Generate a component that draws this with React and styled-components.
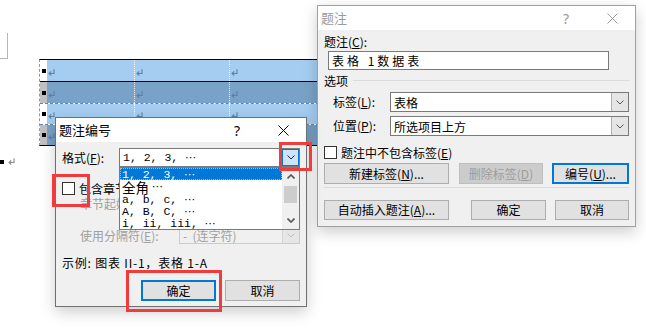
import React from 'react';
import styled, { createGlobalStyle } from 'styled-components';

const GlobalStyle = createGlobalStyle`
  html, body { margin: 0; padding: 0; background: #fff; }
  body { width: 646px; height: 328px; overflow: hidden; font-family: "Noto Sans CJK SC", sans-serif; }
`;

const Desktop = styled.div`
  position: relative;
  width: 646px;
  height: 328px;
  overflow: hidden;
  background: #fff;
`;

/* ---------- document ---------- */
const DocPage = styled.div`
  display: flex;
  flex-direction: column;
  align-items: flex-start;
`;

const CornerMark = styled.div`
  margin-top: 33px;
  width: 7px;
  height: 25px;
  border-right: 1px solid #b5b5b5;
  border-bottom: 1px solid #b5b5b5;
`;

const Table = styled.div`
  margin-left: 39px;
  border-left: 1px dashed #8a9ab0;
  border-top: 1px solid #000;
  border-bottom: 1px solid #000;
  display: flex;
  flex-direction: column;
`;

const TRow = styled.div`
  display: grid;
  grid-template-columns: 7px 87px 95px 95px;
  height: ${p => p.$h}px;
  border-top: ${p => (p.$line === 'solid' ? '1px solid #000' : p.$line === 'dashed' ? '1px dashed #5f86b0' : 'none')};
`;

const TCell = styled.div`
  display: flex;
  align-items: center;
  padding: 3px 0 0 1px;
  box-sizing: border-box;
  background: ${p => (p.$lead ? (p.$dark ? '#c0c0c0' : '#ffffff') : p.$dark ? '#78a2c7' : '#a4cdf1')};
  border-left: ${p => (p.$divider ? '1px dotted rgba(255,255,255,0.85)' : 'none')};
`;

const RowDot = styled.span`
  display: block;
  width: 4px;
  height: 4px;
  margin-left: 1px;
  margin-top: -3px;
  background: #000;
`;

const ParaMark = styled.div`
  margin-top: 9px;
  height: 10px;
  display: flex;
  align-items: flex-end;
  gap: 4px;
`;

const ParaDot = styled.span`
  display: block;
  width: 4px;
  height: 4px;
  margin-bottom: 1px;
  background: #000;
`;

const ReturnArrow = ({ color = '#5b80a8' }) => (
  <svg width="7" height="7" viewBox="0 0 7 7">
    <path d="M6 0.3 V4.5 H1.3" fill="none" stroke={color} strokeWidth="1.1" />
    <path d="M3.2 2.4 L1.1 4.5 L3.2 6.6" fill="none" stroke={color} strokeWidth="1.1" />
  </svg>
);

/* ---------- dialogs ---------- */
const Dialog = styled.div`
  position: absolute;
  left: ${p => p.$x}px;
  top: ${p => p.$y}px;
  width: ${p => p.$w}px;
  height: ${p => p.$h}px;
  box-sizing: border-box;
  border: 1px solid ${p => (p.$active ? '#707070' : '#a0a0a0')};
  background: #f0f0f0;
  box-shadow: 0 5px 14px rgba(0, 0, 0, 0.2);
  display: flex;
  flex-direction: column;
  font-family: "Noto Sans CJK SC", sans-serif;
  font-size: 12px;
  color: #000;
  z-index: ${p => (p.$active ? 3 : 2)};
`;

const TitleBar = styled.div`
  height: 24px;
  flex: none;
  background: #fff;
  display: flex;
  align-items: center;
`;

const TitleText = styled.div`
  flex: 1;
  padding-left: 3px;
  font-size: 13px;
  line-height: 24px;
  color: ${p => (p.$active ? '#000' : '#9a9a9a')};
`;

const CapBtn = styled.div`
  width: 46px;
  height: 24px;
  display: flex;
  align-items: center;
  justify-content: center;
  font-size: 14px;
  font-family: "Noto Sans", sans-serif;
  color: ${p => (p.$active ? '#000' : '#9a9a9a')};
`;

const CloseIcon = ({ color }) => (
  <svg width="11" height="11" viewBox="0 0 11 11">
    <path d="M0.5 0.5 L10.5 10.5 M10.5 0.5 L0.5 10.5" stroke={color} strokeWidth="1" fill="none" />
  </svg>
);

const Body = styled.div`
  flex: 1;
  position: relative;
  display: flex;
  flex-direction: column;
`;

const Row = styled.div`
  display: flex;
  align-items: center;
  flex: none;
  height: ${p => p.$h}px;
  margin-top: ${p => p.$mt || 0}px;
  padding-left: ${p => p.$pl || 0}px;
  padding-right: ${p => p.$pr || 0}px;
  gap: ${p => p.$gap || 0}px;
  justify-content: ${p => p.$justify || 'flex-start'};
`;

const Label = styled.span`
  flex: none;
  width: ${p => (p.$w ? `${p.$w}px` : 'auto')};
  margin-left: ${p => p.$ml || 0}px;
  white-space: nowrap;
  line-height: 16px;
  letter-spacing: ${p => p.$ls || 0}px;
  color: ${p => (p.$disabled ? '#a0a0a0' : '#000')};
`;

const Key = styled.span`
  text-decoration: underline;
  text-underline-offset: 1px;
`;

const Combo = styled.div`
  flex: none;
  box-sizing: border-box;
  width: ${p => p.$w}px;
  height: ${p => p.$h}px;
  border: 1px solid ${p => (p.$disabled ? '#cccccc' : '#7a7a7a')};
  background: ${p => (p.$disabled ? '#f0f0f0' : '#fff')};
  display: flex;
  align-items: stretch;
`;

const ComboText = styled.div`
  flex: 1;
  padding-left: 3px;
  display: flex;
  align-items: center;
  white-space: pre;
  overflow: hidden;
  font-family: ${p => (p.$mono ? '"Liberation Mono", "Noto Sans CJK SC", monospace' : '"Noto Sans CJK SC", sans-serif')};
  font-size: ${p => (p.$mono ? '11.5px' : '12px')};
  color: ${p => (p.$disabled ? '#a0a0a0' : '#000')};
`;

const ComboBtn = styled.div`
  flex: none;
  width: 17px;
  box-sizing: border-box;
  display: flex;
  align-items: center;
  justify-content: center;
  background: ${p => (p.$hot ? '#cce4f7' : p.$disabled ? '#e6e6e6' : '#e5e5e5')};
  border: ${p => (p.$hot ? '1px solid #0078d7' : 'none')};
  border-left: 1px solid ${p => (p.$hot ? '#0078d7' : p.$disabled ? '#d5d5d5' : '#b0b0b0')};
`;

const Ellip = styled.span`
  font-family: "DejaVu Sans", sans-serif;
  font-size: 11px;
  letter-spacing: -0.5px;
`;

const Chevron = ({ color = '#333', dir = 'down', sw = 1 }) => (
  <svg width="8" height="5" viewBox="0 0 8 5">
    <polyline
      points={dir === 'down' ? '0.5,0.5 4,4 7.5,0.5' : '0.5,4.5 4,1 7.5,4.5'}
      fill="none"
      stroke={color}
      strokeWidth={sw}
    />
  </svg>
);

const CheckBox = styled.span`
  flex: none;
  width: 13px;
  height: 13px;
  box-sizing: border-box;
  border: 1px solid #333;
  background: #fff;
`;

const Btn = styled.button`
  flex: none;
  box-sizing: border-box;
  width: ${p => p.$w}px;
  height: ${p => p.$h || 20}px;
  margin: 0 0 0 ${p => p.$ml || 0}px;
  padding: 0;
  font-family: "Noto Sans CJK SC", sans-serif;
  font-size: 12px;
  line-height: 1;
  color: ${p => (p.disabled ? '#9d9d9d' : '#000')};
  background: ${p => (p.disabled ? '#cccccc' : '#e1e1e1')};
  border: ${p => (p.$primary ? '2px solid #0078d7' : `1px solid ${p.disabled ? '#bfbfbf' : '#adadad'}`)};
  display: flex;
  align-items: center;
  justify-content: center;
  white-space: nowrap;
`;

const TextBox = styled.div`
  flex: none;
  box-sizing: border-box;
  margin: 1px 0 0 10px;
  width: 281px;
  height: 19px;
  border: 1px solid #7a7a7a;
  background: #fff;
  padding-left: 3px;
  display: flex;
  align-items: center;
  letter-spacing: 3px;
  white-space: pre;
`;

const GroupHead = styled.div`
  display: flex;
  align-items: center;
  height: 15px;
  margin-top: 3px;
  padding: 0 5px 0 6px;
  gap: 5px;
`;

const GroupLine = styled.div`
  flex: 1;
  height: 1px;
  background: #dcdcdc;
`;

const Separator = styled.div`
  flex: none;
  height: 1px;
  margin: ${p => p.$mt}px 5px 0 6px;
  background: #dcdcdc;
`;

/* ---------- dropdown list ---------- */
const DropList = styled.div`
  position: absolute;
  left: 63px;
  top: 25px;
  width: 181px;
  height: 63px;
  box-sizing: border-box;
  border: 1px solid #7a7a7a;
  background: #fff;
  display: flex;
  z-index: 5;
  overflow: hidden;
`;

const ListItems = styled.div`
  flex: 1;
  display: flex;
  flex-direction: column;
`;

const ListItem = styled.div`
  flex: none;
  height: ${p => p.$h || 12}px;
  box-sizing: border-box;
  display: flex;
  align-items: center;
  white-space: pre;
  font-family: ${p => (p.$cjk ? '"Noto Sans CJK SC", sans-serif' : '"Liberation Mono", "Noto Sans CJK SC", monospace')};
  font-size: ${p => (p.$cjk ? '13.5px' : '11.5px')};
  color: ${p => (p.$sel ? '#fff' : '#000')};
  background: ${p => (p.$sel ? '#0078d7' : 'transparent')};
  border: ${p => (p.$sel ? '1px dotted #f4a65a' : 'none')};
  padding-left: ${p => (p.$sel ? 1 : 2)}px;
`;

const ScrollBar = styled.div`
  flex: none;
  width: 17px;
  background: #f0f0f0;
  display: flex;
  flex-direction: column;
  align-items: center;
`;

const ScrollArrow = styled.div`
  flex: none;
  height: 17px;
  width: 17px;
  display: flex;
  align-items: center;
  justify-content: center;
`;

const ScrollThumb = styled.div`
  flex: none;
  width: 13px;
  height: 17px;
  margin-top: 1px;
  background: #cdcdcd;
`;

const ScrollSpace = styled.div`
  flex: 1;
`;

/* ---------- red annotation boxes ---------- */
const RedBox = styled.div`
  position: absolute;
  left: ${p => p.$x}px;
  top: ${p => p.$y}px;
  width: ${p => p.$w}px;
  height: ${p => p.$h}px;
  box-sizing: border-box;
  border: 3px solid #f03c3c;
  z-index: 10;
`;

const rows = [
  { h: 21, line: 'none', dark: false },
  { h: 21, line: 'solid', dark: true },
  { h: 20, line: 'dashed', dark: false },
  { h: 20, line: 'dashed', dark: true },
];

function DocTable() {
  return (
    <Table>
      {rows.map((r, i) => (
        <TRow key={i} $h={r.h} $line={r.line}>
          <TCell $lead $dark={r.dark}>
            <RowDot />
          </TCell>
          <TCell $dark={r.dark}>
            <ReturnArrow />
          </TCell>
          <TCell $dark={r.dark} $divider>
            <ReturnArrow />
          </TCell>
          <TCell $dark={r.dark} $divider>
            <ReturnArrow />
          </TCell>
        </TRow>
      ))}
    </Table>
  );
}

function NumberingDialog() {
  return (
    <Dialog $x={55} $y={117} $w={252} $h={190} $active>
      <TitleBar>
        <TitleText $active>题注编号</TitleText>
        <CapBtn $active>?</CapBtn>
        <CapBtn $active>
          <CloseIcon color="#000" />
        </CapBtn>
      </TitleBar>
      <Body>
        <Row $h={19} $mt={6} $pl={6}>
          <Label $w={57}>
            格式(<Key>F</Key>):
          </Label>
          <Combo $w={181} $h={19}>
            <ComboText $mono>
              {'1, 2, 3, '}
              <Ellip>⋯</Ellip>
            </ComboText>
            <ComboBtn $hot>
              <Chevron color="#2a2a2a" />
            </ComboBtn>
          </Combo>
        </Row>
        <Row $h={13} $mt={15} $pl={6}>
          <CheckBox />
          <Label $ml={4}>
            包含章节号(<Key>C</Key>)
          </Label>
        </Row>
        <Row $h={18} $pl={24}>
          <Label $w={99} $disabled>
            章节起始样式(<Key>P</Key>):
          </Label>
          <Combo $w={121} $h={17} $disabled>
            <ComboText $disabled>标题 1</ComboText>
            <ComboBtn $disabled>
              <Chevron color="#bfbfbf" />
            </ComboBtn>
          </Combo>
        </Row>
        <Row $h={17} $mt={14} $pl={24}>
          <Label $w={99} $disabled>
            使用分隔符(<Key>E</Key>):
          </Label>
          <Combo $w={121} $h={17} $disabled>
            <ComboText $disabled>{'-  (连字符)'}</ComboText>
            <ComboBtn $disabled>
              <Chevron color="#bfbfbf" />
            </ComboBtn>
          </Combo>
        </Row>
        <Row $h={16} $mt={11} $pl={6}>
          <Label $ls={0.8}>{'示例:  图表 II-1，表格 1-A'}</Label>
        </Row>
        <Row $h={21} $mt={9} $pr={6} $gap={9} $justify="flex-end">
          <Btn $w={75} $h={21} $primary>
            确定
          </Btn>
          <Btn $w={75} $h={21}>
            取消
          </Btn>
        </Row>
        <DropList>
          <ListItems>
            <ListItem $sel>
              {'1, 2, 3, '}
              <Ellip>⋯</Ellip>
            </ListItem>
            <ListItem $cjk $h={13}>
              {'全角 '}
              <Ellip>⋯</Ellip>
            </ListItem>
            <ListItem>
              {'a, b, c, '}
              <Ellip>⋯</Ellip>
            </ListItem>
            <ListItem>
              {'A, B, C, '}
              <Ellip>⋯</Ellip>
            </ListItem>
            <ListItem>
              {'i, ii, iii, '}
              <Ellip>⋯</Ellip>
            </ListItem>
          </ListItems>
          <ScrollBar>
            <ScrollArrow>
              <Chevron color="#555" dir="up" sw={1.6} />
            </ScrollArrow>
            <ScrollThumb />
            <ScrollSpace />
            <ScrollArrow>
              <Chevron color="#555" sw={1.6} />
            </ScrollArrow>
          </ScrollBar>
        </DropList>
      </Body>
    </Dialog>
  );
}

function CaptionDialog() {
  return (
    <Dialog $x={317} $y={5} $w={319} $h={222}>
      <TitleBar>
        <TitleText>题注</TitleText>
        <CapBtn>?</CapBtn>
        <CapBtn>
          <CloseIcon color="#9a9a9a" />
        </CapBtn>
      </TitleBar>
      <Body>
        <Row $h={16} $mt={4} $pl={6}>
          <Label>
            题注(<Key>C</Key>):
          </Label>
        </Row>
        <TextBox>表格 1数据表</TextBox>
        <GroupHead>
          <Label>选项</Label>
          <GroupLine />
        </GroupHead>
        <Row $h={20} $mt={4} $pl={15}>
          <Label $w={57}>
            标签(<Key>L</Key>):
          </Label>
          <Combo $w={239} $h={20}>
            <ComboText>表格</ComboText>
            <ComboBtn>
              <Chevron color="#555" />
            </ComboBtn>
          </Combo>
        </Row>
        <Row $h={20} $mt={4} $pl={15}>
          <Label $w={57}>
            位置(<Key>P</Key>):
          </Label>
          <Combo $w={239} $h={20}>
            <ComboText>所选项目上方</ComboText>
            <ComboBtn>
              <Chevron color="#555" />
            </ComboBtn>
          </Combo>
        </Row>
        <Row $h={13} $mt={10} $pl={6}>
          <CheckBox />
          <Label $ml={4}>
            题注中不包含标签(<Key>E</Key>)
          </Label>
        </Row>
        <Row $h={21} $mt={4} $pl={6}>
          <Btn $w={125} $h={21}>
            新建标签(<Key>N</Key>)...
          </Btn>
          <Btn $w={84} $h={21} $ml={10} disabled>
            删除标签(<Key>D</Key>)
          </Btn>
          <Btn $w={77} $h={21} $ml={9} $primary>
            编号(<Key>U</Key>)...
          </Btn>
        </Row>
        <Separator $mt={3} />
        <Row $h={20} $mt={12} $pl={6}>
          <Btn $w={125}>
            自动插入题注(<Key>A</Key>)...
          </Btn>
          <Btn $w={75} $ml={22}>
            确定
          </Btn>
          <Btn $w={74} $ml={9}>
            取消
          </Btn>
        </Row>
      </Body>
    </Dialog>
  );
}

export default function App() {
  return (
    <>
      <GlobalStyle />
      <Desktop>
        <DocPage>
          <CornerMark />
          <DocTable />
          <ParaMark>
            <ParaDot />
            <ReturnArrow color="#8a8a8a" />
          </ParaMark>
        </DocPage>
        <NumberingDialog />
        <CaptionDialog />
        <RedBox $x={279} $y={142} $w={33} $h={29} />
        <RedBox $x={52} $y={174} $w={38} $h={33} />
        <RedBox $x={126} $y={270} $w={96} $h={42} />
      </Desktop>
    </>
  );
}
